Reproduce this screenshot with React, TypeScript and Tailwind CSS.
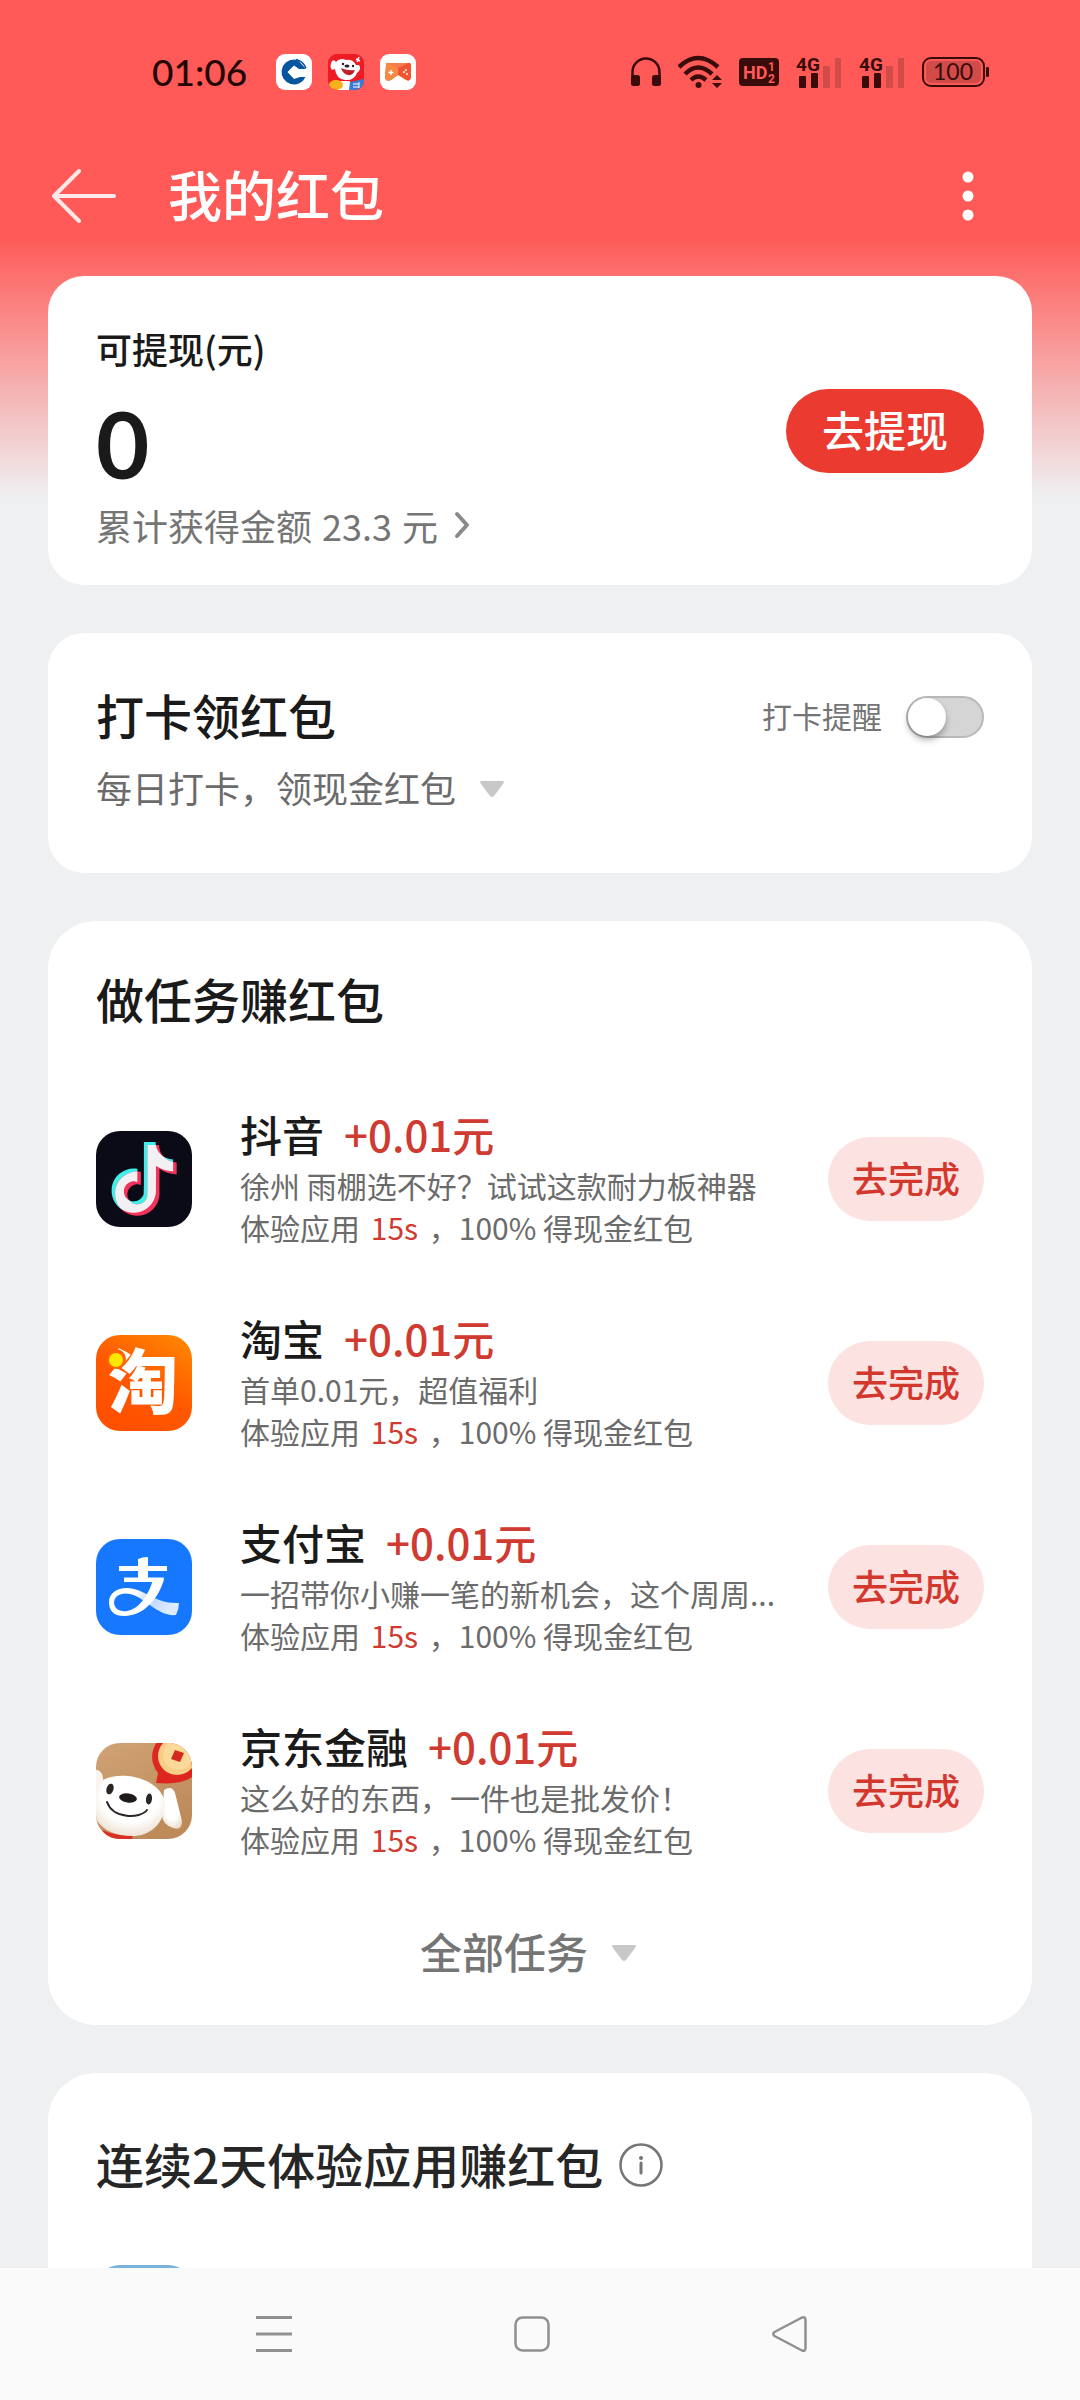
import type { ReactNode } from "react";

const NOTE_PATH =
  "M12.525.02c1.31-.02 2.61-.01 3.91-.02.08 1.53.63 3.09 1.75 4.17 1.12 1.11 2.7 1.62 4.24 1.79v4.03c-1.44-.05-2.89-.35-4.2-.97-.57-.26-1.1-.59-1.62-.93-.01 2.92.01 5.84-.02 8.75-.08 1.4-.54 2.79-1.35 3.94-1.31 1.92-3.58 3.17-5.91 3.21-1.43.08-2.86-.31-4.08-1.03-2.02-1.19-3.44-3.37-3.65-5.71-.02-.5-.03-1-.01-1.49.18-1.9 1.12-3.72 2.58-4.96 1.66-1.44 3.98-2.13 6.15-1.72.02 1.48-.04 2.96-.04 4.44-.99-.32-2.15-.23-3.02.37-.63.41-1.11 1.04-1.36 1.75-.21.51-.15 1.07-.14 1.61.24 1.64 1.82 3.02 3.5 2.87 1.12-.01 2.19-.66 2.77-1.61.19-.33.4-.67.41-1.06.1-1.79.06-3.57.07-5.36.01-4.03-.01-8.05.02-12.07z";

function DouyinIcon() {
  return (
    <svg viewBox="0 0 96 96" className="size-24 shrink-0 rounded-3xl" aria-hidden="true">
      <defs>
        <clipPath id="douyinNote">
          <path d={NOTE_PATH} transform="translate(11 11) scale(2.95)" />
        </clipPath>
      </defs>
      <rect width="96" height="96" fill="#0b0b17" />
      <path d={NOTE_PATH} transform="translate(11 11) scale(2.95)" fill="#3ff0ea" />
      <path d={NOTE_PATH} transform="translate(14.5 14) scale(2.95)" fill="#f5315c" />
      <g clipPath="url(#douyinNote)">
        <path d={NOTE_PATH} transform="translate(14.5 14) scale(2.95)" fill="#f3f0f3" />
      </g>
    </svg>
  );
}

function TaobaoIcon() {
  return (
    <svg viewBox="0 0 96 96" className="size-24 shrink-0 overflow-visible" aria-hidden="true">
      <defs>
        <linearGradient id="taobao" x1="1" y1="0" x2="0.4" y2="1">
          <stop offset="0" stopColor="#ff8a00" />
          <stop offset="0.6" stopColor="#ff5800" />
          <stop offset="1" stopColor="#ff5000" />
        </linearGradient>
      </defs>
      <rect width="96" height="96" rx="24" fill="url(#taobao)" />
      <text
        x="47"
        y="73"
        textAnchor="middle"
        fontSize="70"
        fontWeight="900"
        fill="#fff"
        fontFamily="'Noto Sans CJK SC', sans-serif"
      >
        淘
      </text>
      <circle cx="20" cy="24" r="10" fill="#ff6200" />
      <circle cx="20" cy="25" r="7" fill="#ffe800" />
    </svg>
  );
}

function AlipayIcon() {
  return (
    <svg viewBox="0 0 96 96" className="size-24 shrink-0 rounded-3xl" aria-hidden="true">
      <defs>
        <linearGradient id="alipayTail" x1="0" y1="0" x2="1" y2="0.3">
          <stop offset="0" stopColor="#fff" />
          <stop offset="0.4" stopColor="#fff" />
          <stop offset="0.65" stopColor="#b9d7ff" />
          <stop offset="1" stopColor="#dcebff" />
        </linearGradient>
      </defs>
      <rect width="96" height="96" fill="#1677ff" />
      <path d="M23 27H71V32H23ZM28 38.500H68L67 43H28Z" fill="#fff" />
      <path d="M42 20Q46 18 52 18V43H42Z" fill="#fff" />
      <path
        d="M13 63C13 55 20 49 31 49C48 49 58 65 83 64Q83 70 80 76C62 78 49 58 34 55C25 53 18 57 18 64Z"
        fill="url(#alipayTail)"
      />
      <path
        d="M68 40C64 56 50 77 28 77C17 77 13 71 13 63L18 63C18 70 24 73 31 72C43 70 53 56 57 40Z"
        fill="#fff"
      />
    </svg>
  );
}

function JdFinanceIcon() {
  return (
    <svg viewBox="0 0 96 96" className="size-24 shrink-0 rounded-3xl" aria-hidden="true">
      <defs>
        <linearGradient id="jdBg" x1="0" y1="0" x2="0.5" y2="1">
          <stop offset="0" stopColor="#d0a375" />
          <stop offset="1" stopColor="#bd8a5a" />
        </linearGradient>
        <radialGradient id="jdHead" cx="0.5" cy="0.35" r="0.7">
          <stop offset="0.6" stopColor="#fff" />
          <stop offset="1" stopColor="#ecdccb" />
        </radialGradient>
      </defs>
      <rect width="96" height="96" fill="url(#jdBg)" />
      <path d="M60 40L62 30A25 25 0 1 1 96 34Q86 42 60 40Z" fill="#dd2620" />
      <circle cx="81" cy="13" r="19" fill="#f8cd86" />
      <circle cx="82" cy="12" r="15" fill="#fbd998" />
      <path d="M79 7L88 10L84 19L75 16Z" fill="#d4291e" />
      <path d="M68 47Q76 42 79 50L86 78Q86 88 77 85Q66 81 66 72Z" fill="url(#jdHead)" />
      <ellipse cx="1" cy="36" rx="6" ry="9" fill="#fbf4ec" />
      <path
        d="M0 42C8 34 20 32 32 33C52 35 69 47 69 62C68 82 52 95 32 93C14 92 5 84 0 76Z"
        fill="url(#jdHead)"
      />
      <ellipse cx="14" cy="46" rx="3.5" ry="5.5" transform="rotate(18 14 46)" fill="#2b2523" />
      <ellipse cx="53" cy="56" rx="3" ry="5.5" transform="rotate(8 53 56)" fill="#2b2523" />
      <ellipse cx="32" cy="55" rx="9" ry="4.5" transform="rotate(8 32 55)" fill="#1f1a19" />
      <path
        d="M11 59C17 76 44 76 51 67"
        fill="none"
        stroke="#2b2523"
        strokeWidth="2"
        strokeLinecap="round"
      />
      <path d="M6 87Q20 93 37 93L36 96H12Z" fill="#dc2f24" />
    </svg>
  );
}

type Task = { name: string; desc: string; icon: ReactNode };

const tasks: Task[] = [
  { name: "抖音", desc: "徐州 雨棚选不好？试试这款耐力板神器", icon: <DouyinIcon /> },
  { name: "淘宝", desc: "首单0.01元，超值福利", icon: <TaobaoIcon /> },
  { name: "支付宝", desc: "一招带你小赚一笔的新机会，这个周周...", icon: <AlipayIcon /> },
  { name: "京东金融", desc: "这么好的东西，一件也是批发价！", icon: <JdFinanceIcon /> },
];

function SignalIcon() {
  return (
    <svg viewBox="0 0 46 34" className="h-[34px] w-[46px] overflow-visible" aria-hidden="true">
      <text
        x="0"
        y="16"
        fontSize="19"
        fontWeight="700"
        fill="#3a0b0b"
        fontFamily="Roboto, sans-serif"
      >
        4G
      </text>
      <rect x="3" y="21" width="7" height="12" rx="1" fill="#3a0b0b" />
      <rect x="15" y="18" width="7" height="15" rx="1" fill="#3a0b0b" />
      <rect x="27" y="11" width="7" height="22" rx="1" fill="#d14b49" />
      <rect x="39" y="3" width="6" height="30" rx="1" fill="#d14b49" />
    </svg>
  );
}

function StatusBar() {
  return (
    <div className="flex h-36 shrink-0 items-center justify-between pl-[152px] pr-[90px] text-[#240606]">
      <div className="flex items-center">
        <span className="w-[124px] font-[Lato] text-[37px] font-medium leading-9">01:06</span>
        <div className="flex gap-4">
          <svg viewBox="0 0 36 36" className="size-9" aria-hidden="true">
            <rect width="36" height="36" rx="9" fill="#fff" />
            <path
              d="M18 5.5A12.5 12.5 0 1 0 29.5 23H24L18 25L11.5 18L18 11.5L23 15H30L22 6.2Z"
              fill="#07559f"
            />
            <path d="M18 12L24 18L18 24L12 18Z" fill="#fff" />
            <path d="M20 5.5Q27 7 30 14" stroke="#07559f" strokeWidth="1.5" fill="none" />
          </svg>
          <svg viewBox="0 0 36 36" className="size-9 rounded-[9px]" aria-hidden="true">
            <rect width="36" height="36" fill="#ee1c22" />
            <path
              d="M4 7Q1 12 4 16L7 15Q8 25 17 26Q26 27 29 19Q34 15 31 11L28 11Q25 5 18 6Q12 3 8 8Q6 5 4 7Z"
              fill="#fff"
            />
            <circle cx="15" cy="10" r="1.2" fill="#222" />
            <circle cx="25" cy="12" r="1.2" fill="#222" />
            <ellipse cx="19" cy="12" rx="2.5" ry="1.5" fill="#222" />
            <path d="M13 14Q20 17 27 16Q25 22 20 21Q15 20 13 14Z" fill="#c0222a" />
            <rect x="10" y="27" width="12" height="9" fill="#fff" />
            <ellipse cx="8" cy="31" rx="7" ry="5" fill="#f7b21b" />
            <path d="M22 28L36 25V36H21Z" fill="#3a7ad8" />
            <path d="M25 30h6M25 33h6M31 28v6" stroke="#fff" strokeWidth="1" />
            <path d="M28 5l4 2M31 3l-2 5" stroke="#fff" strokeWidth="1.5" />
          </svg>
          <svg viewBox="0 0 36 36" className="size-9" aria-hidden="true">
            <rect width="36" height="36" rx="9" fill="#fff" />
            <path d="M6 11Q6 8 9 9L28 9Q31 8 31 11V24Q30 28 26 26L18 21L11 26Q6 28 5 24Z" fill="#f0552f" />
            <path d="M6 11Q6 8 9 9L18 14V21L11 26Q6 28 5 24Z" fill="#f58a45" />
            <path d="M9 9H28L18 14Z" fill="#fa7a50" />
            <path d="M11 16v5M8.5 18.5h5" stroke="#fff" strokeWidth="1.5" />
            <circle cx="24" cy="18" r="1" fill="#fff" />
            <circle cx="27" cy="20" r="1" fill="#fff" />
            <circle cx="26" cy="16" r="1" fill="#fff" />
          </svg>
        </div>
      </div>
      <div className="flex items-center gap-[17px]">
        <svg viewBox="0 0 30 30" className="size-[30px]" aria-hidden="true">
          <path d="M1.5 22V15A13.5 13.5 0 0 1 28.5 15V22" fill="none" stroke="#3a0b0b" strokeWidth="2.5" />
          <rect x="0" y="18" width="9" height="11" rx="2.5" fill="#3a0b0b" />
          <rect x="21" y="18" width="9" height="11" rx="2.5" fill="#3a0b0b" />
        </svg>
        <svg viewBox="0 0 44 34" className="h-[34px] w-11" aria-hidden="true">
          <g fill="none" stroke="#3a0b0b" strokeWidth="4.5">
            <path d="M1 12Q20 -6 40 12" />
            <path d="M7 19Q20 6 34 19" />
            <path d="M13 25Q20 18 28 25" />
          </g>
          <circle cx="20.5" cy="30" r="3" fill="#3a0b0b" />
          <path d="M34 25L39 20L44 25ZM34 28L39 33L44 28Z" fill="#3a0b0b" />
        </svg>
        <svg viewBox="0 0 40 28" className="h-7 w-10 overflow-visible" aria-hidden="true">
          <rect width="40" height="28" rx="4" fill="#3a0b0b" />
          <g fill="#ff5a57" fontWeight="700" fontFamily="Roboto, sans-serif">
            <text x="4" y="21" fontSize="18">
              HD
            </text>
            <text x="29" y="13" fontSize="12">
              1
            </text>
            <text x="29" y="25" fontSize="12">
              2
            </text>
          </g>
        </svg>
        <SignalIcon />
        <SignalIcon />
        <svg viewBox="0 0 68 30" className="h-[30px] w-[68px] overflow-visible" aria-hidden="true">
          <rect x="1" y="1" width="61" height="28" rx="8" fill="none" stroke="#3a0b0b" strokeWidth="2" />
          <rect x="4" y="4" width="55" height="22" rx="5" fill="#d14b49" />
          <rect x="64" y="10" width="3" height="10" rx="1" fill="#3a0b0b" />
          <text
            x="31"
            y="23"
            textAnchor="middle"
            fontSize="23"
            fill="#3a0b0b"
            fontFamily="Lato, sans-serif"
          >
            100
          </text>
        </svg>
      </div>
    </div>
  );
}

function DownTriangle() {
  return (
    <svg viewBox="0 0 24 16" className="h-4 w-6" aria-hidden="true">
      <path d="M1 0H23Q25 0 23 3L14 15Q12 17 10 15L1 3Q-1 0 1 0Z" fill="#c8c8c8" />
    </svg>
  );
}

function TaskRow({ task }: { task: Task }) {
  return (
    <li className="flex items-center">
      {task.icon}
      <div className="ml-12 min-w-0 flex-1 pb-1.5 text-[30px] leading-[42px] text-[#6b6b6b]">
        <h3 className="flex gap-5 text-[42px] font-medium leading-[60px] text-[#1a1a1a]">
          {task.name}
          <span className="text-[#cf3a31]">+0.01元</span>
        </h3>
        <p className="truncate">{task.desc}</p>
        <p className="truncate">
          体验应用 <span className="mx-1 text-[#cf3a31]">15s</span> ，100% 得现金红包
        </p>
      </div>
      <button
        type="button"
        className="ml-6 h-[84px] w-[156px] shrink-0 rounded-full bg-[#fce3e2] pb-1 text-[36px] font-medium text-[#d3382f]"
      >
        去完成
      </button>
    </li>
  );
}

export default function App() {
  return (
    <div className="flex h-screen flex-col bg-[#eff0f2] bg-[linear-gradient(to_bottom,#ff5a57_236px,#eff0f2_498px)] font-['Noto_Sans_CJK_SC',sans-serif] text-[#1a1a1a]">
      <StatusBar />
      <header className="flex h-[104px] shrink-0 items-center pl-12 pr-24 text-white">
        <button type="button" aria-label="返回" className="flex h-16 w-[72px] items-center justify-center">
          <svg viewBox="0 0 64 54" className="h-[54px] w-16" aria-hidden="true">
            <path
              d="M27 2L2 27L27 52M2 27H62"
              fill="none"
              stroke="#ffe9e8"
              strokeWidth="4"
              strokeLinecap="round"
              strokeLinejoin="round"
            />
          </svg>
        </button>
        <h1 className="ml-12 flex-1 pb-1 text-[54px] font-medium leading-[72px]">我的红包</h1>
        <button type="button" aria-label="更多" className="flex h-16 w-8 items-center justify-center">
          <svg viewBox="0 0 12 50" className="h-[50px] w-3" aria-hidden="true">
            <circle cx="6" cy="6" r="5.5" fill="#fff" />
            <circle cx="6" cy="25" r="5.5" fill="#fff" />
            <circle cx="6" cy="44" r="5.5" fill="#fff" />
          </svg>
        </button>
      </header>

      <main className="flex min-h-0 flex-1 flex-col gap-12 overflow-y-auto px-12 pt-7 [scrollbar-width:none] *:shrink-0">
        <section className="flex items-center justify-between rounded-[36px] bg-white px-12 py-[42px]">
          <div>
            <h2 className="text-[36px] font-medium leading-[60px]">可提现(元)</h2>
            <p className="mt-[18px] font-[Lato] text-[92px] font-bold leading-[96px]">0</p>
            <a href="#records" className="mt-[15px] flex items-center gap-4 text-[36px] leading-9 text-[#757575]">
              <span>
                累计获得金额 <span className="mx-0.5">23.3</span> 元
              </span>
              <svg viewBox="0 0 16 28" className="h-7 w-4" aria-hidden="true">
                <path
                  d="M3 3L13 14L3 25"
                  fill="none"
                  stroke="#8a8a8a"
                  strokeWidth="4"
                  strokeLinecap="round"
                  strokeLinejoin="round"
                />
              </svg>
            </a>
          </div>
          <button
            type="button"
            className="h-[84px] w-[198px] rounded-full bg-[#eb3a2f] pb-1 text-[42px] font-medium text-white"
          >
            去提现
          </button>
        </section>

        <section className="rounded-[36px] bg-white px-12 pb-[60px] pt-12">
          <div className="flex items-center justify-between">
            <h2 className="pb-1.5 text-[48px] font-medium leading-[66px]">打卡领红包</h2>
            <label className="flex items-center gap-6 text-[30px] text-[#757575]">
              <span className="pb-1">打卡提醒</span>
              <input
                type="checkbox"
                role="switch"
                className="relative h-[42px] w-[78px] appearance-none rounded-full border-2 border-[#b8b8b8] bg-[#d5d5d5] before:absolute before:left-0 before:top-0 before:size-[38px] before:rounded-full before:bg-white before:shadow-[0_4px_6px_rgba(0,0,0,0.3)]"
              />
            </label>
          </div>
          <button type="button" className="mt-3 flex items-center gap-6 text-[36px] leading-[44px] text-[#6b6b6b]">
            <span className="pb-1">每日打卡，领现金红包</span>
            <DownTriangle />
          </button>
        </section>

        <section className="rounded-[48px] bg-white px-12 pb-[42px] pt-12">
          <h2 className="text-[48px] font-medium leading-[58px]">做任务赚红包</h2>
          <ul className="mt-[77px] flex flex-col gap-[54px]">
            {tasks.map((task) => (
              <TaskRow key={task.name} task={task} />
            ))}
          </ul>
          <button
            type="button"
            className="mx-auto mt-[57px] flex items-center gap-6 pr-6 text-[42px] font-medium leading-[56px] text-[#757575]"
          >
            <span className="pb-1">全部任务</span>
            <DownTriangle />
          </button>
        </section>

        <section className="rounded-t-[48px] bg-white px-12 pt-[60px]">
          <div className="flex items-center gap-4">
            <h2 className="pb-1 text-[48px] font-medium leading-[60px] text-[#262626]">连续2天体验应用赚红包</h2>
            <button type="button" aria-label="规则说明">
              <svg viewBox="0 0 44 44" className="size-11" aria-hidden="true">
                <circle cx="22" cy="22" r="20.5" fill="none" stroke="#757575" strokeWidth="2.5" />
                <circle cx="22" cy="15" r="2" fill="#757575" />
                <path d="M22 20V30" stroke="#757575" strokeWidth="3" strokeLinecap="round" />
              </svg>
            </button>
          </div>
          <div className="mt-[68px] size-24 rounded-3xl bg-[#7ab2de]" />
        </section>
      </main>

      <nav className="flex h-[132px] shrink-0 items-center bg-[#fafafa] pl-[145px] pr-[161px]">
        <button type="button" aria-label="最近任务" className="flex h-full flex-1 items-center justify-center">
          <svg viewBox="0 0 36 36" className="size-9" aria-hidden="true">
            <path d="M0 1.5H36M0 18H36M0 34.5H36" stroke="#909090" strokeWidth="3" />
          </svg>
        </button>
        <button type="button" aria-label="主屏幕" className="flex h-full flex-1 items-center justify-center">
          <svg viewBox="0 0 36 36" className="size-9" aria-hidden="true">
            <rect x="1.5" y="1.5" width="33" height="33" rx="7" fill="none" stroke="#909090" strokeWidth="2.5" />
          </svg>
        </button>
        <button type="button" aria-label="返回上一页" className="flex h-full flex-1 items-center justify-center">
          <svg viewBox="0 0 36 36" className="size-9" aria-hidden="true">
            <path
              d="M2.5 16L30 1.5Q33.5 0.5 33.5 4V32Q33.5 35.5 30 34.5L2.5 20Q0 18 2.5 16Z"
              fill="none"
              stroke="#909090"
              strokeWidth="2.5"
              strokeLinejoin="round"
            />
          </svg>
        </button>
      </nav>
    </div>
  );
}
